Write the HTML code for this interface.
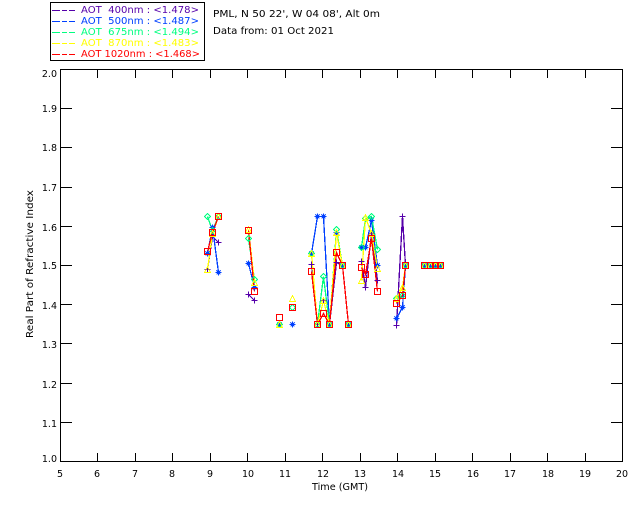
<!DOCTYPE html>
<html><head><meta charset="utf-8"><style>
html,body{margin:0;padding:0;background:#fff}
svg{display:block}
text{font-family:"DejaVu Sans","Liberation Sans",sans-serif;font-size:9.5px;fill:#000}
</style></head><body>
<svg width="640" height="512" viewBox="0 0 640 512" xmlns="http://www.w3.org/2000/svg" shape-rendering="crispEdges">
<defs>
<path id="p" d="M-3 0H3M0 -3V3" fill="none" stroke="#5500aa"/>
<path id="s" d="M-3 0H3M0 -3V3M-2 -2L2 2M-2 2L2 -2" fill="none" stroke="#0040ff"/>
<path id="d" d="M0 -3L3 0L0 3L-3 0Z" fill="none" stroke="#00ff80"/>
<path id="t" d="M0 -3L3 3H-3Z" fill="none" stroke="#ffff00"/>
<rect id="r" x="-3" y="-3" width="6" height="6" fill="none" stroke="#ff0000" stroke-width="1"/>
</defs>

<!-- legend -->
<rect x="50.5" y="2.5" width="154" height="58" fill="none" stroke="#000"/>
<g fill="none">
<path d="M52 10.5H60M62 10.5H67M69 10.5H75" stroke="#5500aa"/>
<path d="M52 21.5H60M62 21.5H67M69 21.5H75" stroke="#0040ff"/>
<path d="M52 32.5H60M62 32.5H67M69 32.5H75" stroke="#00ff80"/>
<path d="M52 43.5H60M62 43.5H67M69 43.5H75" stroke="#ffff00"/>
<path d="M52 54.5H60M62 54.5H67M69 54.5H75" stroke="#ff0000"/>
</g>
<text x="81" y="13" style="fill:#5500aa" textLength="118" lengthAdjust="spacingAndGlyphs" xml:space="preserve">AOT  400nm : &lt;1.478&gt;</text>
<text x="81" y="24" style="fill:#0040ff" textLength="118" lengthAdjust="spacingAndGlyphs" xml:space="preserve">AOT  500nm : &lt;1.487&gt;</text>
<text x="81" y="35" style="fill:#00ff80" textLength="118" lengthAdjust="spacingAndGlyphs" xml:space="preserve">AOT  675nm : &lt;1.494&gt;</text>
<text x="81" y="46" style="fill:#ffff00" textLength="118" lengthAdjust="spacingAndGlyphs" xml:space="preserve">AOT  870nm : &lt;1.483&gt;</text>
<text x="81" y="57" style="fill:#ff0000" textLength="119" lengthAdjust="spacingAndGlyphs" xml:space="preserve">AOT 1020nm : &lt;1.468&gt;</text>

<text x="213" y="17" textLength="167" lengthAdjust="spacingAndGlyphs">PML, N 50 22', W 04 08', Alt 0m</text>
<text x="213" y="34" textLength="121" lengthAdjust="spacingAndGlyphs">Data from: 01 Oct 2021</text>

<!-- axes -->
<g fill="none" stroke="#000">
<rect x="60.5" y="69.5" width="562" height="392"/>
<path d="M97.5 69V78M97.5 461V453M135.5 69V78M135.5 461V453M172.5 69V78M172.5 461V453M210.5 69V78M210.5 461V453M247.5 69V78M247.5 461V453M285.5 69V78M285.5 461V453M322.5 69V78M322.5 461V453M360.5 69V78M360.5 461V453M397.5 69V78M397.5 461V453M435.5 69V78M435.5 461V453M472.5 69V78M472.5 461V453M510.5 69V78M510.5 461V453M547.5 69V78M547.5 461V453M585.5 69V78M585.5 461V453"/>
<path d="M60 108.5H72M622 108.5H611M60 147.5H72M622 147.5H611M60 187.5H72M622 187.5H611M60 226.5H72M622 226.5H611M60 265.5H72M622 265.5H611M60 304.5H72M622 304.5H611M60 343.5H72M622 343.5H611M60 383.5H72M622 383.5H611M60 422.5H72M622 422.5H611"/>
</g>

<!-- y labels -->
<g text-anchor="end">
<text x="57" y="77">2.0</text><text x="57" y="112">1.9</text><text x="57" y="151">1.8</text><text x="57" y="191">1.7</text><text x="57" y="231">1.6</text><text x="57" y="269">1.5</text><text x="57" y="309">1.4</text><text x="57" y="348">1.3</text><text x="57" y="388">1.2</text><text x="57" y="427">1.1</text><text x="57" y="462">1.0</text>
</g>
<!-- x labels -->
<g text-anchor="middle">
<text x="60" y="477">5</text><text x="97" y="477">6</text><text x="135" y="477">7</text><text x="172" y="477">8</text><text x="210" y="477">9</text><text x="248" y="477">10</text><text x="285" y="477">11</text><text x="323" y="477">12</text><text x="360" y="477">13</text><text x="398" y="477">14</text><text x="435" y="477">15</text><text x="473" y="477">16</text><text x="510" y="477">17</text><text x="548" y="477">18</text><text x="585" y="477">19</text><text x="622" y="477">20</text>
</g>
<text x="312" y="490" textLength="56" lengthAdjust="spacingAndGlyphs">Time (GMT)</text>
<text transform="translate(33 338) rotate(-90)" textLength="148" lengthAdjust="spacingAndGlyphs">Real Part of Refractive Index</text>

<!-- series lines -->
<g fill="none" stroke-width="1.3">
<g stroke="#5500aa">
<polyline points="207.5,269.5 212.5,236.5 218.5,242.5"/><polyline points="248.5,294.5 254.5,300.5"/>
<polyline points="311.5,264.5 317.5,324.5 323.5,300.5 329.5,324.5 336.5,262.5 342.5,265.5 348.5,324.5"/>
<polyline points="361.5,261.5 365.5,287.5 371.5,233.5 377.5,280.5"/>
<polyline points="396.5,325.5 402.5,216.5 405.5,265.5"/><polyline points="424.5,265.5 440.5,265.5"/>
</g>
<g stroke="#0040ff">
<polyline points="207.5,253.5 212.5,227.5 218.5,272.5"/><polyline points="248.5,263.5 254.5,287.5"/>
<polyline points="311.5,253.5 317.5,216.5 323.5,216.5 329.5,324.5 336.5,232.5 342.5,265.5 348.5,324.5"/>
<polyline points="361.5,247.5 365.5,247.5 371.5,220.5 377.5,265.5"/>
<polyline points="396.5,318.5 402.5,307.5 405.5,265.5"/><polyline points="424.5,265.5 440.5,265.5"/>
</g>
<g stroke="#00ff80">
<polyline points="207.5,216.5 212.5,230.5 218.5,216.5"/><polyline points="248.5,238.5 254.5,279.5"/>
<polyline points="311.5,253.5 317.5,324.5 323.5,276.5 329.5,324.5 336.5,229.5 342.5,265.5 348.5,324.5"/>
<polyline points="361.5,247.5 365.5,218.5 371.5,216.5 377.5,249.5"/>
<polyline points="396.5,298.5 402.5,295.5 405.5,265.5"/><polyline points="424.5,265.5 440.5,265.5"/>
</g>
<g stroke="#ffff00">
<polyline points="207.5,269.5 212.5,233.5 218.5,216.5"/><polyline points="248.5,229.5 254.5,282.5"/>
<polyline points="311.5,253.5 317.5,324.5 323.5,300.5 329.5,324.5 336.5,232.5 342.5,265.5 348.5,324.5"/>
<polyline points="361.5,280.5 365.5,217.5 371.5,233.5 377.5,268.5"/>
<polyline points="396.5,298.5 402.5,287.5 405.5,265.5"/><polyline points="424.5,265.5 440.5,265.5"/>
</g>
<g stroke="#ff0000">
<polyline points="207.5,251.5 212.5,232.5 218.5,216.5"/><polyline points="248.5,230.5 254.5,291.5"/>
<polyline points="311.5,271.5 317.5,324.5 323.5,313.5 329.5,324.5 336.5,252.5 342.5,265.5 348.5,324.5"/>
<polyline points="361.5,267.5 365.5,274.5 371.5,238.5 377.5,291.5"/>
<polyline points="396.5,303.5 402.5,295.5 405.5,265.5"/><polyline points="424.5,265.5 440.5,265.5"/>
</g>
</g>

<!-- purple plus markers -->
<use href="#p" x="207.5" y="269.5"/><use href="#p" x="212.5" y="236.5"/><use href="#p" x="218.5" y="242.5"/><use href="#p" x="248.5" y="294.5"/><use href="#p" x="254.5" y="300.5"/><use href="#p" x="279.5" y="324.5"/><use href="#p" x="292.5" y="324.5"/><use href="#p" x="311.5" y="264.5"/><use href="#p" x="317.5" y="324.5"/><use href="#p" x="323.5" y="300.5"/><use href="#p" x="329.5" y="324.5"/><use href="#p" x="336.5" y="262.5"/><use href="#p" x="342.5" y="265.5"/><use href="#p" x="348.5" y="324.5"/><use href="#p" x="361.5" y="261.5"/><use href="#p" x="365.5" y="287.5"/><use href="#p" x="371.5" y="233.5"/><use href="#p" x="377.5" y="280.5"/><use href="#p" x="396.5" y="325.5"/><use href="#p" x="402.5" y="216.5"/><use href="#p" x="405.5" y="265.5"/><use href="#p" x="424.5" y="265.5"/><use href="#p" x="430.5" y="265.5"/><use href="#p" x="435.5" y="265.5"/><use href="#p" x="440.5" y="265.5"/>

<!-- blue star markers -->
<use href="#s" x="207.5" y="253.5"/><use href="#s" x="212.5" y="227.5"/><use href="#s" x="218.5" y="272.5"/><use href="#s" x="248.5" y="263.5"/><use href="#s" x="254.5" y="287.5"/><use href="#s" x="279.5" y="324.5"/><use href="#s" x="292.5" y="324.5"/><use href="#s" x="311.5" y="253.5"/><use href="#s" x="317.5" y="216.5"/><use href="#s" x="323.5" y="216.5"/><use href="#s" x="329.5" y="324.5"/><use href="#s" x="336.5" y="232.5"/><use href="#s" x="342.5" y="265.5"/><use href="#s" x="348.5" y="324.5"/><use href="#s" x="361.5" y="247.5"/><use href="#s" x="365.5" y="247.5"/><use href="#s" x="371.5" y="220.5"/><use href="#s" x="377.5" y="265.5"/><use href="#s" x="396.5" y="318.5"/><use href="#s" x="402.5" y="307.5"/><use href="#s" x="405.5" y="265.5"/><use href="#s" x="424.5" y="265.5"/><use href="#s" x="430.5" y="265.5"/><use href="#s" x="435.5" y="265.5"/><use href="#s" x="440.5" y="265.5"/>

<!-- green diamond markers -->
<use href="#d" x="207.5" y="216.5"/><use href="#d" x="212.5" y="230.5"/><use href="#d" x="218.5" y="216.5"/><use href="#d" x="248.5" y="238.5"/><use href="#d" x="254.5" y="279.5"/><use href="#d" x="279.5" y="324.5"/><use href="#d" x="292.5" y="307.5"/><use href="#d" x="311.5" y="253.5"/><use href="#d" x="317.5" y="324.5"/><use href="#d" x="323.5" y="276.5"/><use href="#d" x="329.5" y="324.5"/><use href="#d" x="336.5" y="229.5"/><use href="#d" x="342.5" y="265.5"/><use href="#d" x="348.5" y="324.5"/><use href="#d" x="361.5" y="247.5"/><use href="#d" x="365.5" y="218.5"/><use href="#d" x="371.5" y="216.5"/><use href="#d" x="377.5" y="249.5"/><use href="#d" x="396.5" y="298.5"/><use href="#d" x="402.5" y="295.5"/><use href="#d" x="405.5" y="265.5"/><use href="#d" x="424.5" y="265.5"/><use href="#d" x="430.5" y="265.5"/><use href="#d" x="435.5" y="265.5"/><use href="#d" x="440.5" y="265.5"/>

<!-- yellow triangle markers -->
<use href="#t" x="207.5" y="269.5"/><use href="#t" x="212.5" y="233.5"/><use href="#t" x="218.5" y="216.5"/><use href="#t" x="248.5" y="229.5"/><use href="#t" x="254.5" y="282.5"/><use href="#t" x="279.5" y="324.5"/><use href="#t" x="292.5" y="298.5"/><use href="#t" x="311.5" y="253.5"/><use href="#t" x="317.5" y="324.5"/><use href="#t" x="323.5" y="300.5"/><use href="#t" x="329.5" y="324.5"/><use href="#t" x="336.5" y="232.5"/><use href="#t" x="342.5" y="265.5"/><use href="#t" x="348.5" y="324.5"/><use href="#t" x="361.5" y="280.5"/><use href="#t" x="365.5" y="217.5"/><use href="#t" x="371.5" y="233.5"/><use href="#t" x="377.5" y="268.5"/><use href="#t" x="396.5" y="298.5"/><use href="#t" x="402.5" y="287.5"/><use href="#t" x="405.5" y="265.5"/><use href="#t" x="424.5" y="265.5"/><use href="#t" x="430.5" y="265.5"/><use href="#t" x="435.5" y="265.5"/><use href="#t" x="440.5" y="265.5"/>

<!-- red square markers -->
<use href="#r" x="207.5" y="251.5"/><use href="#r" x="212.5" y="232.5"/><use href="#r" x="218.5" y="216.5"/><use href="#r" x="248.5" y="230.5"/><use href="#r" x="254.5" y="291.5"/><use href="#r" x="279.5" y="317.5"/><use href="#r" x="292.5" y="307.5"/><use href="#r" x="311.5" y="271.5"/><use href="#r" x="317.5" y="324.5"/><use href="#r" x="323.5" y="313.5"/><use href="#r" x="329.5" y="324.5"/><use href="#r" x="336.5" y="252.5"/><use href="#r" x="342.5" y="265.5"/><use href="#r" x="348.5" y="324.5"/><use href="#r" x="361.5" y="267.5"/><use href="#r" x="365.5" y="274.5"/><use href="#r" x="371.5" y="238.5"/><use href="#r" x="377.5" y="291.5"/><use href="#r" x="396.5" y="303.5"/><use href="#r" x="402.5" y="295.5"/><use href="#r" x="405.5" y="265.5"/><use href="#r" x="424.5" y="265.5"/><use href="#r" x="430.5" y="265.5"/><use href="#r" x="435.5" y="265.5"/><use href="#r" x="440.5" y="265.5"/>
</svg>
</body></html>
